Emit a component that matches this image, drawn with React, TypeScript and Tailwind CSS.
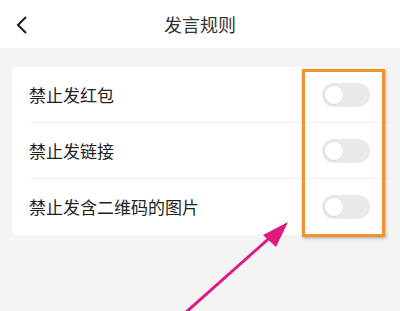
import React from 'react';

const rules = ['禁止发红包', '禁止发链接', '禁止发含二维码的图片'];

function Toggle() {
    return (
        <div className="w-[48px] h-[24px] rounded-full bg-[#e9e9e9] flex items-center px-[3px]">
            <div className="w-[18px] h-[18px] rounded-full bg-white shadow-[0_1px_2px_rgba(0,0,0,0.08)]" />
        </div>
    );
}

export default function App() {
    return (
        <div
            className="relative w-[400px] h-[311px] overflow-hidden bg-[#f4f4f4] text-[#222]"
            style={{ fontFamily: '"Noto Sans CJK SC", "Noto Sans", sans-serif' }}
        >
            {/* header */}
            <div className="h-[48px] bg-white flex items-center relative">
                <svg className="absolute left-[15px] top-[15px]" width="14" height="20" viewBox="0 0 14 20">
                    <path d="M11 2 L3 10 L11 18" fill="none" stroke="#1a1a1a" strokeWidth="2" />
                </svg>
                <div className="flex-1 text-center text-[18px] text-[#333] leading-none">发言规则</div>
            </div>

            {/* rules card */}
            <div className="mx-[12px] mt-[19px] bg-white rounded-[6px] pl-[16px]">
                {rules.map((r, i) => (
                    <div
                        key={r}
                        className={
                            'h-[56px] flex items-center justify-between pr-[18px] ' +
                            (i < rules.length - 1 ? 'border-b border-[#f0f0f0]' : '')
                        }
                    >
                        <span className="text-[17px] pl-[1px]">{r}</span>
                        <Toggle />
                    </div>
                ))}
            </div>

            {/* annotation box */}
            <div className="absolute left-[302px] top-[69px] w-[83px] h-[168px] border-[3px] border-[#f0922e] shadow-[1px_1px_3px_rgba(0,0,0,0.35)]" />

            {/* annotation arrow */}
            <svg className="absolute left-0 top-0" width="400" height="311" viewBox="0 0 400 311">
                <line x1="184" y1="314" x2="274" y2="234" stroke="#e0197f" strokeWidth="3" />
                <polygon points="288,222 263,235 276,247" fill="#e0197f" />
            </svg>
        </div>
    );
}
